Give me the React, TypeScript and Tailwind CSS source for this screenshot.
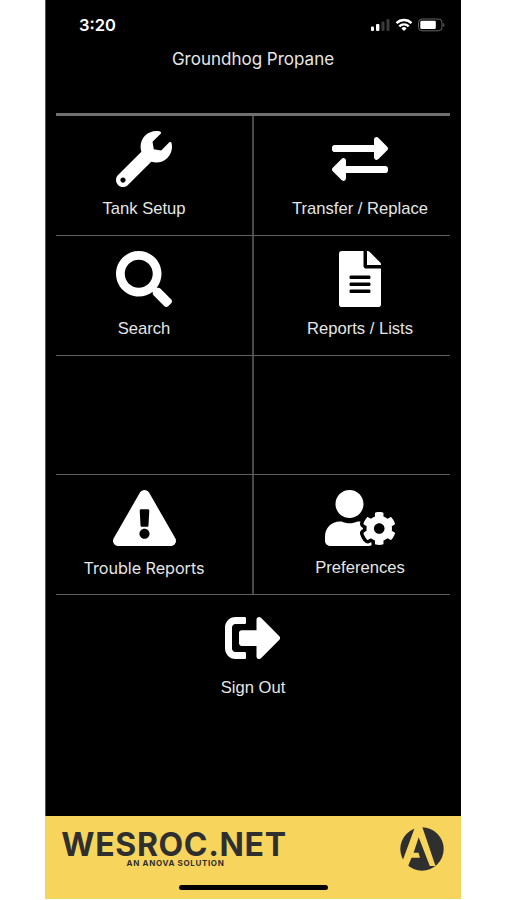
import React from 'react';
import type { IconType } from 'react-icons';
import {
  FaExchangeAlt,
  FaExclamationTriangle,
  FaFileAlt,
  FaSearch,
  FaSignOutAlt,
  FaUserCog,
  FaWrench,
} from 'react-icons/fa';

interface MenuItem {
  label: string;
  icon: IconType;
  iconClass?: string;
  labelClass?: string;
}

const menuRows: (MenuItem | null)[][] = [
  [
    { label: 'Tank Setup', icon: FaWrench },
    { label: 'Transfer / Replace', icon: FaExchangeAlt },
  ],
  [
    { label: 'Search', icon: FaSearch },
    { label: 'Reports / Lists', icon: FaFileAlt },
  ],
  [null, null],
  [
    {
      label: 'Trouble Reports',
      icon: FaExclamationTriangle,
      iconClass: 'w-[63px]',
      labelClass: "font-['Inter',sans-serif] text-[16.2px] tracking-[-0.05px]",
    },
    { label: 'Preferences', icon: FaUserCog, iconClass: 'w-[70px]' },
  ],
];

const StatusBar: React.FC = () => (
  <div className="flex h-[50px] items-center justify-between pl-[33px] pr-[16px]">
    <span className="font-['Inter',sans-serif] text-[16.5px] font-semibold">3:20</span>
    <svg width="74" height="14" viewBox="0 0 74 14" fill="#fff">
      {/* signal */}
      <rect x="0" y="8.5" width="3" height="4.5" rx="1" />
      <rect x="5" y="6" width="3.4" height="7" rx="1" />
      <rect x="10.5" y="3.5" width="3" height="9.5" rx="1" fill="#3a3a3a" />
      <rect x="15.5" y="1" width="3" height="12" rx="1" fill="#3a3a3a" />
      {/* wifi */}
      <g fill="none" stroke="#fff" strokeWidth="2.4">
        <path d="M25.5 5.1a10.8 10.8 0 0 1 15 0" />
        <path d="M28.3 8.3a6.7 6.7 0 0 1 9.4 0" />
      </g>
      <path d="M33 13l-2.6-2.6a3.7 3.7 0 0 1 5.2 0z" />
      {/* battery */}
      <rect x="47.5" y="1" width="23.5" height="11.8" rx="3.5" fill="none" stroke="#666" />
      <rect x="49.3" y="2.8" width="15.5" height="8.2" rx="1.2" />
      <path d="M72.3 5v4c1.6-.6 1.6-3.4 0-4z" fill="#666" />
    </svg>
  </div>
);

const MenuButton: React.FC<{ item: MenuItem }> = ({ item }) => {
  const Icon = item.icon;
  return (
    <button className="flex w-full flex-col items-center pt-[15px]">
      <Icon className={`h-[56px] ${item.iconClass ?? 'w-[56px]'}`} />
      <span className={`mt-[11px] leading-[22px] text-[#e6e6e6] ${item.labelClass ?? 'text-[16.6px]'}`}>
        {item.label}
      </span>
    </button>
  );
};

const AnovaLogo: React.FC = () => (
  <svg width="44" height="44" viewBox="0 0 44 44">
    <circle cx="22" cy="22" r="21.7" fill="#2f2f2f" />
    <path d="M15 0L2.5 34L7.5 40.5L11.5 30.7H20L18.5 25.7H13.6L18.7 10.3L29.8 39H35.5L22.3 0z" fill="#f7d55c" />
  </svg>
);

const Footer: React.FC = () => (
  <footer className="-ml-px flex h-[83px] flex-col bg-[#f7d55c] text-[#2f2f2f]">
    <div className="flex justify-between pl-[17px] pr-[17px] pt-[11px]">
      <div className="flex w-[224px] flex-col items-center font-['Inter',sans-serif]">
        <span className="mt-[3px] whitespace-nowrap text-[32px] leading-[30px] font-bold tracking-[0.65px]">
          WESROC.NET
        </span>
        <span className="ml-[3px] whitespace-nowrap text-[8px] leading-[7px] font-bold tracking-[0.65px]">
          AN ANOVA SOLUTION
        </span>
      </div>
      <AnovaLogo />
    </div>
    <div className="mx-auto mb-[9px] mt-auto h-[5px] w-[149px] rounded-full bg-black" />
  </footer>
);

const App: React.FC = () => {
  return (
    <div className="flex h-[900px] justify-center bg-white font-['Liberation_Sans',Arial,sans-serif]">
      <main className="mr-px flex h-[899px] w-[416px] flex-col border-l border-[#555] bg-black text-white">
        <StatusBar />
        <h1 className="-ml-px text-center font-['Inter',sans-serif] text-[17px] leading-[18px] text-[#e6e6e6]">
          Groundhog Propane
        </h1>

        <div className="ml-[10px] mr-[11px] mt-[45px] border-t-[3px] border-[#707070]">
          {menuRows.map((row, i) => (
            <div key={i} className="flex h-[119.75px] border-b-[1.5px] border-[#606060]">
              {row.map((item, j) => (
                <div
                  key={j}
                  className={j === 0 ? 'w-[198px] border-r-2 border-[#484848] pr-[20px]' : 'flex-1 pl-[16px]'}
                >
                  {item && <MenuButton item={item} />}
                </div>
              ))}
            </div>
          ))}
          <MenuButton item={{ label: 'Sign Out', icon: FaSignOutAlt }} />
        </div>

        <div className="flex-1" />
        <Footer />
      </main>
    </div>
  );
};

export default App;
